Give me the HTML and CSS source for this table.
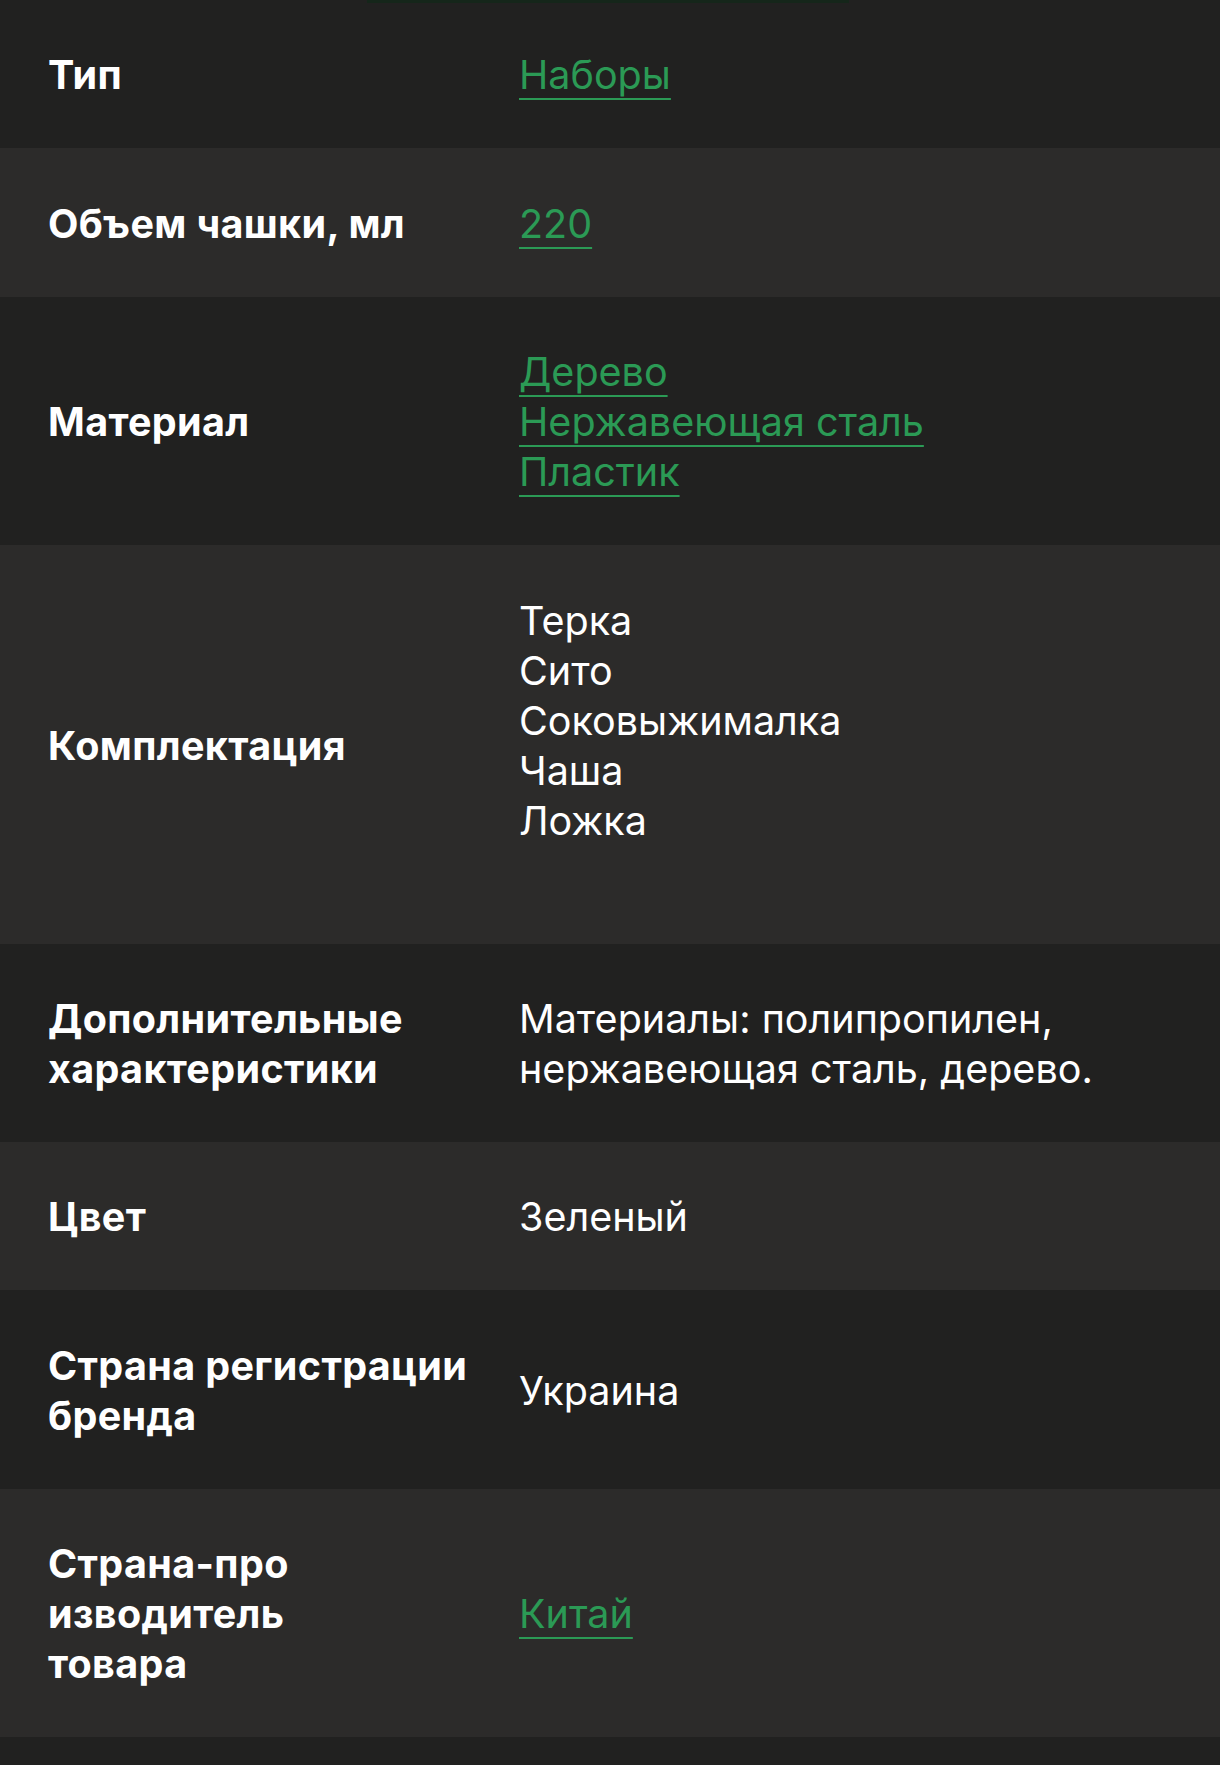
FILE: index.html
```html
<!DOCTYPE html>
<html lang="ru">
<head>
<meta charset="utf-8">
<title>Характеристики</title>
<link rel="stylesheet" href="styles.css">
</head>
<body>
<div class="specs">
  <div class="tab-indicator"></div>
  <div class="row">
    <div class="label">Тип</div>
    <div class="value"><a href="#">Наборы</a></div>
  </div>
  <div class="row">
    <div class="label">Объем чашки, мл</div>
    <div class="value"><a href="#">220</a></div>
  </div>
  <div class="row">
    <div class="label">Материал</div>
    <div class="value">
      <a href="#">Дерево</a><br>
      <a href="#">Нержавеющая сталь</a><br>
      <a href="#">Пластик</a>
    </div>
  </div>
  <div class="row">
    <div class="label">Комплектация</div>
    <div class="value">Терка<br>Сито<br>Соковыжималка<br>Чаша<br>Ложка<br><br></div>
  </div>
  <div class="row">
    <div class="label">Дополнительные характеристики</div>
    <div class="value">Материалы: полипропилен, нержавеющая сталь, дерево.</div>
  </div>
  <div class="row">
    <div class="label">Цвет</div>
    <div class="value">Зеленый</div>
  </div>
  <div class="row">
    <div class="label">Страна регистрации бренда</div>
    <div class="value">Украина</div>
  </div>
  <div class="row">
    <div class="label">Страна-про<br>изводитель<br>товара</div>
    <div class="value"><a href="#">Китай</a></div>
  </div>
  <div class="row row-empty"></div>
</div>
</body>
</html>
```
FILE: styles.css
```css
html, body {
  margin: 0;
  padding: 0;
  background: #212120;
}

.specs {
  position: relative;
  font-family: "Inter", "Noto Sans", sans-serif;
  color: #ffffff;
  font-size: 39.5px;
  line-height: 50px;
}

.tab-indicator {
  position: absolute;
  top: 0;
  left: 367px;
  width: 482px;
  height: 3px;
  background: #15261a;
}

.row {
  display: grid;
  grid-template-columns: 471px 1fr;
  align-items: center;
  padding: 50.4px 40px 48px 48px;
  background: #212120;
}

.row:nth-child(odd) {
  background: #2c2b2a;
}

.label {
  font-weight: 700;
  letter-spacing: 0.35px;
  padding-right: 10px;
}

.value {
  font-weight: 400;
}

.value a {
  color: #2b9a55;
  text-decoration: underline;
  text-decoration-thickness: 2px;
  text-underline-offset: 9px;
}

.row-empty {
  height: 50px;
}
```
